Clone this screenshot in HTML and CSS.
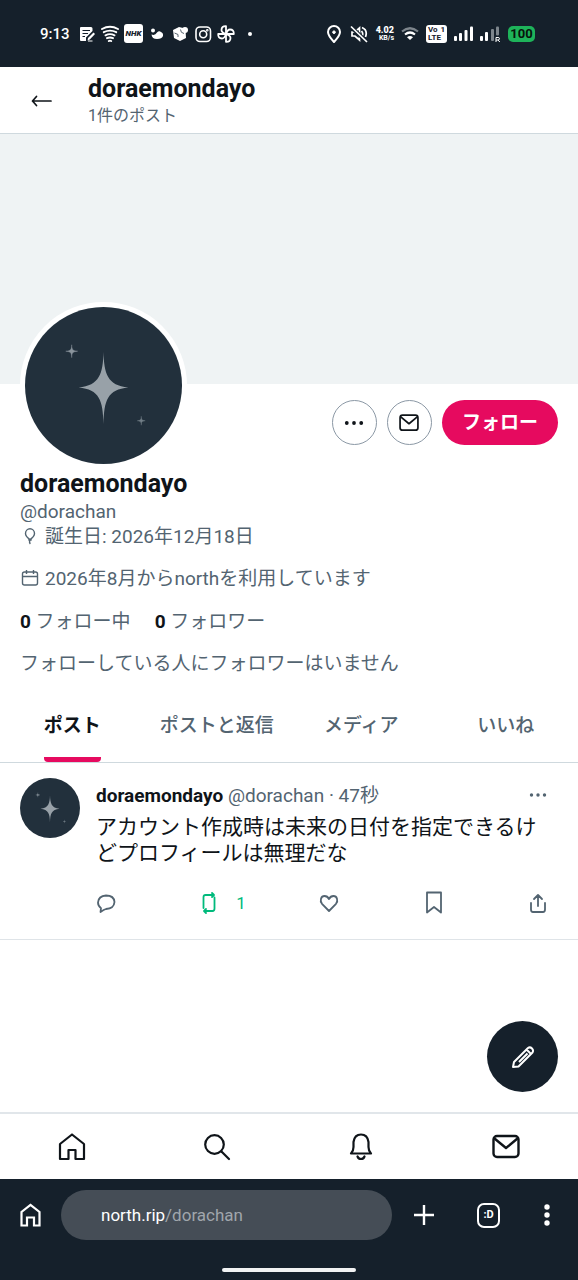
FILE: index.html
```html
<!DOCTYPE html>
<html lang="ja">
<head>
<meta charset="utf-8">
<meta name="viewport" content="width=device-width, initial-scale=1">
<title>doraemondayo (@dorachan)</title>
<link rel="stylesheet" href="styles.css">
</head>
<body>
<svg class="sprite" aria-hidden="true">
  <symbol id="avatar" viewBox="0 0 158 158">
    <rect width="158" height="158" fill="#22303c"/>
    <path d="M79 45C79.500 67 83 79 104 81C83 83 79.500 94 79 118C78.500 94 75 83 54 81C75 79 78.500 67 79 45Z" fill="#98a1a8"/>
    <path d="M47 38C47.200 43 48 44 53 44.500C48 45 47.200 46 47 51C46.800 46 46 45 41 44.500C46 44 46.800 43 47 38Z" fill="#8b959d" stroke="#8b959d" stroke-width=".400"/>
    <path d="M117 110C117.200 113.500 117.500 114 121 114.500C117.500 115 117.200 115.500 117 119C116.800 115.500 116.500 115 113 114.500C116.500 114 116.800 113.500 117 110Z" fill="#737f88" stroke="#737f88" stroke-width=".400"/>
  </symbol>
  <symbol id="mail" viewBox="0 0 28 28">
    <rect x="1.500" y="3" width="25" height="21" rx="3.500" fill="none" stroke="currentColor" stroke-width="2.400"/>
    <path d="M2.500 5.500L14 15L25.500 5.500" fill="none" stroke="currentColor" stroke-width="2.400" stroke-linejoin="round"/>
  </symbol>
  <symbol id="dots" viewBox="0 0 18 18">
    <g fill="currentColor"><circle cx="2.500" cy="9" r="1.700"/><circle cx="9" cy="9" r="1.700"/><circle cx="15.500" cy="9" r="1.700"/></g>
  </symbol>
</svg>

<div class="status">
  <div class="status-left">
    <span class="clock">9:13</span>
    <svg width="18" height="18" viewBox="0 0 18 18"><path d="M3 2H13Q14.500 2 14.500 3.500V6L8 12.500V16H3Q2 16 2 15V3Q2 2 3 2Z" fill="#fff"/><path d="M4.500 5.500H12M4.500 8.500H10M4.500 11.500H7" stroke="#15202b" stroke-width="1.200"/><path d="M9.500 15.500L10 13L15.500 7.500L17 9L11.800 14.600Z" fill="#fff"/><path d="M10 16H14.500" stroke="#fff"/></svg>
    <svg width="18" height="18" viewBox="0 0 18 18" fill="none" stroke="#fff" stroke-width="1.900" stroke-linecap="round"><path d="M1 4Q9-.500 17 4M2.800 7.200Q9 4 15.200 7.200M4.500 10.300Q9 8 13.500 10.300M6 13.200Q9 11.800 12 13.200M7.800 16Q9 15.400 10.200 16"/></svg>
    <span class="nhk">NHK</span>
    <svg width="18" height="18" viewBox="0 0 18 18" fill="#fff"><circle cx="5" cy="5.500" r="2"/><path d="M3.500 9.500Q7 11 9 7.500Q11 5.500 13 7Q15.500 8 15 11Q14 14 9 14Q4 14 3.500 9.500Z"/></svg>
    <svg width="18" height="18" viewBox="0 0 18 18"><path d="M2 5L8 2L12 3L14.500 5L15 13L9 16L3 13Z" fill="#fff"/><circle cx="14" cy="5" r="3" fill="#fff"/><path d="M9.500 4.500Q9.500 8 13 8.500M3.500 8L7 9.500V12" fill="none" stroke="#596570"/></svg>
    <svg width="18" height="18" viewBox="0 0 18 18" fill="none" stroke="#fff" stroke-width="1.600"><rect x="2" y="2" width="14.500" height="14.500" rx="4"/><circle cx="9.200" cy="9.200" r="3.500"/><circle cx="13.300" cy="5.200" r=".500"/></svg>
    <svg width="18" height="18" viewBox="0 0 18 18" fill="none" stroke="#fff" stroke-width="1.800" stroke-linejoin="round"><path id="blade" d="M9 9V1.200Q4.500 1 4.500 5Q4.500 7.500 9 9Z"/><use href="#blade" transform="rotate(90 9 9)"/><use href="#blade" transform="rotate(180 9 9)"/><use href="#blade" transform="rotate(270 9 9)"/></svg>
    <svg width="18" height="18" viewBox="0 0 18 18"><circle cx="10" cy="9" r="2" fill="#fff"/></svg>
  </div>
  <div class="status-right">
    <svg width="18" height="18" viewBox="0 0 18 18" fill="none" stroke="#fff" stroke-width="2"><path d="M9 17Q3 10.500 3 7A6 6 0 0 1 15 7Q15 10.500 9 17Z"/><circle cx="9" cy="7.200" r="1.300" fill="#fff" stroke-width="1"/></svg>
    <svg width="18" height="18" viewBox="0 0 18 18" fill="none" stroke="#fff" stroke-width="1.700"><path d="M2 7H5L9.500 3V15L5 11H2ZM11.500 6Q14 9 11.500 12M12 2.500Q18 5 15.500 12"/><path d="M1 2L17 17" stroke="#15202b" stroke-width="4"/><path d="M1 1.500L17 17"/></svg>
    <span class="speed"><b>4.02</b><span>KB/s</span></span>
    <svg width="18" height="18" viewBox="0 0 18 18" fill="none" stroke-width="2.200"><path d="M1 6.500Q9 0 17 6.500" stroke="#7d858c"/><path d="M4 9.500Q9 5.500 14 9.500" stroke="#fff"/><path d="M9 15L6 12.200Q9 9.800 12 12.200Z" fill="#fff"/></svg>
    <span class="volte"><span>Vo<i>1</i></span><span>LTE</span></span>
    <svg width="19" height="18" viewBox="0 0 19 18" fill="#fff"><rect x="0" y="11" width="3" height="5" rx="1"/><rect x="5" y="8" width="3" height="8" rx="1"/><rect x="10.500" y="5" width="3" height="11" rx="1"/><rect x="16" y="1.500" width="3" height="14.500" rx="1"/></svg>
    <svg width="21" height="18" viewBox="0 0 21 18" fill="#fff"><rect x="0" y="11" width="3" height="5" rx="1"/><rect x="5" y="7" width="3" height="9" rx="1"/><rect x="11" y="4" width="3" height="12" rx="1" fill="#7d858c"/><rect x="16" y="1.500" width="3" height="9" rx="1" fill="#7d858c"/><path d="M16 17V12.500H18Q19.500 12.500 19.500 13.700T18 15H16M18 15L19.800 17" fill="none" stroke="#fff" stroke-width="1"/></svg>
    <span class="battery">100</span>
  </div>
</div>

<header class="topbar">
  <button class="plain back" aria-label="戻る"><svg width="22" height="14" viewBox="0 0 22 14" fill="none" stroke="#0f1419" stroke-width="1.700" stroke-linecap="round" stroke-linejoin="round"><path d="M20 7H1.500M5.500 2.500L1.500 7L5.500 11.500"/></svg></button>
  <div>
    <h1 class="name">doraemondayo</h1>
    <p class="count">1件のポスト</p>
  </div>
</header>

<main>
  <div class="banner"></div>
  <section class="profile">
    <div class="profile-top">
      <svg class="avatar-large" role="img" aria-label="プロフィール画像"><use href="#avatar"/></svg>
      <div class="profile-actions">
        <button class="round" aria-label="その他"><svg width="20" height="20"><use href="#dots"/></svg></button>
        <button class="round" aria-label="メッセージ"><svg width="20" height="20"><use href="#mail"/></svg></button>
        <button class="follow">フォロー</button>
      </div>
    </div>
    <h2 class="name">doraemondayo</h2>
    <p class="handle">@dorachan</p>
    <p class="meta birthday"><svg width="20" height="20" viewBox="0 0 20 20" fill="none" stroke="currentColor" stroke-width="1.400" stroke-linecap="round"><path d="M10 12.500Q5.500 9.500 5.500 6.500A4.500 4.800 0 0 1 14.500 6.500Q14.500 9.500 10 12.500ZM8.800 13L10 12.500L11.200 13M10 13Q9 15 10 16.500"/></svg>誕生日: 2026年12月18日</p>
    <p class="meta"><svg width="20" height="20" viewBox="0 0 20 20" fill="none" stroke="currentColor" stroke-width="1.400"><rect x="2.500" y="3" width="15" height="13" rx="2"/><path d="M2.500 7.500H17.500M6.500 1V5M13.500 1V5"/></svg>2026年8月からnorthを利用しています</p>
    <div class="stats"><a href="#following"><b>0</b> フォロー中</a><a href="#followers"><b>0</b> フォロワー</a></div>
    <p class="mutual">フォローしている人にフォロワーはいません</p>
  </section>

  <nav class="tabs">
    <a class="tab active" href="#posts"><span>ポスト</span></a>
    <a class="tab" href="#replies"><span>ポストと返信</span></a>
    <a class="tab" href="#media"><span>メディア</span></a>
    <a class="tab" href="#likes"><span>いいね</span></a>
  </nav>

  <article class="post">
    <svg class="avatar-small" aria-hidden="true"><use href="#avatar"/></svg>
    <div class="post-body">
      <div class="post-head">
        <p><b>doraemondayo</b> @dorachan · 47秒</p>
        <button class="plain" aria-label="その他"><svg width="18" height="18"><use href="#dots"/></svg></button>
      </div>
      <p class="post-text">アカウント作成時は未来の日付を指定できるけどプロフィールは無理だな</p>
      <div class="post-actions">
        <button class="plain" aria-label="返信"><svg width="20" height="24" viewBox="0 0 20 24"><path d="M4.500 21L5 17.200Q2 15 2 11.500Q2.500 5 10 4.500Q18 4.500 18.500 11Q18 17.500 10 18Q8 18.500 4.500 21Z"/></svg></button>
        <button class="plain repost" aria-label="リポスト"><svg width="14" height="24" viewBox="0 0 14 24"><path d="M1.500 17V6Q1.500 4 3.500 4H11.500M10 2L12 4L10 6M12.500 6.500V17.500Q12.500 20 10.500 20H2.500M4 18L2 20L4 22"/></svg><span>1</span></button>
        <button class="plain" aria-label="いいね"><svg width="20" height="24" viewBox="0 0 20 24"><path d="M10 20L3 12.800C.500 9.500 2 5 5.500 5Q8.500 5 10 8Q11.500 5 14.500 5C18 5 19.500 9.500 17 12.800Z"/></svg></button>
        <button class="plain" aria-label="ブックマーク"><svg width="18" height="24" viewBox="0 0 18 24"><path d="M2 1.500H16V21.500L9 16L2 21.500Z"/></svg></button>
        <button class="plain" aria-label="共有"><svg width="18" height="24" viewBox="0 0 18 24"><path d="M9 15V4M5 8L9 4L13 8M2 12V18.500Q2 21 4 21H14Q16 21 16 18.500V12"/></svg></button>
      </div>
    </div>
  </article>
</main>

<footer>
  <button class="compose" aria-label="投稿する"><svg width="24" height="24" viewBox="0 0 24 24" fill="none" stroke="#fff" stroke-width="2" stroke-linejoin="round"><path d="M2 22L3 17L17 3Q19 1.500 21 3.500Q22.800 5.500 21.500 7.500L7.500 21.500ZM15.500 4.500L20 9M8 17L16.500 8.500"/></svg></button>
  <nav class="bottom-nav">
    <a href="#home" aria-label="ホーム"><svg width="28" height="28" viewBox="0 0 28 28"><path d="M2 26V11L14 1.500L26 11V26H17.500V17H10.500V26Z"/></svg></a>
    <a href="#search" aria-label="検索"><svg width="28" height="28" viewBox="0 0 28 28"><circle cx="11.500" cy="11.500" r="9.300"/><path d="M18.500 18.500L26 26"/></svg></a>
    <a href="#notifications" aria-label="通知"><svg width="28" height="28" viewBox="0 0 28 28"><path d="M4 20.500Q6.500 18 6.500 14V9Q7.500 1.500 14 1.500T21.500 9V14Q21.500 18 24 20.500ZM10.500 23.500Q11.500 26 14 26T17.500 23.500"/></svg></a>
    <a href="#messages" aria-label="メッセージ"><svg width="28" height="28"><use href="#mail"/></svg></a>
  </nav>
  <div class="browser">
    <div class="browser-row">
      <button class="plain" aria-label="ホームページ"><svg width="24" height="26" viewBox="0 0 24 26" fill="none" stroke="#fff" stroke-width="2.200"><path d="M2.500 23.500V10L11.500 3L20.500 10V23.500H15V15.500H8V23.500Z"/></svg></button>
      <button class="address">north.rip<span>/dorachan</span></button>
      <button class="plain" aria-label="新しいタブ"><svg width="20" height="20" viewBox="0 0 20 20" stroke="#fff" stroke-width="2.400"><path d="M10 0V20M0 10H20"/></svg></button>
      <button class="tab-count" aria-label="タブ">:D</button>
      <button class="plain" aria-label="メニュー"><svg width="6" height="22" viewBox="0 0 6 22" fill="#fff"><circle cx="3" cy="3" r="2.700"/><circle cx="3" cy="11" r="2.700"/><circle cx="3" cy="19" r="2.700"/></svg></button>
    </div>
    <div class="gesture"></div>
  </div>
</footer>
</body>
</html>
```
FILE: styles.css
```css
* { box-sizing: border-box; }

body {
  margin: 0;
  min-height: 100vh;
  display: flex;
  flex-direction: column;
  background: #fff;
  color: #0f1419;
  font-family: Roboto, "Noto Sans CJK JP", sans-serif;
  font-size: 19px;
  line-height: 26px;
}

h1, h2, p { margin: 0; }
a { color: inherit; text-decoration: none; }
svg { display: block; flex: none; }
.sprite { position: absolute; width: 0; height: 0; }
button { font: inherit; color: inherit; cursor: pointer; }
.plain { display: flex; align-items: center; padding: 0; border: 0; background: none; }

.status {
  display: flex;
  justify-content: space-between;
  align-items: center;
  height: 67px;
  padding: 0 43px 0 40px;
  background: #15202b;
  color: #fff;
}
.status-left, .status-right { display: flex; align-items: center; gap: 5px; }
.status-right { gap: 7px; }
.clock { width: 33px; font-size: 15px; font-weight: 500; white-space: nowrap; }
.nhk {
  width: 19px;
  border-radius: 3px;
  background: #fff;
  color: #15202b;
  font-size: 8px;
  font-weight: 900;
  font-style: italic;
  line-height: 19px;
  text-align: center;
}
.speed { width: 19px; font-size: 7px; line-height: 8px; font-weight: 700; text-align: right; }
.speed b { display: block; font-size: 9px; }
.speed span { display: block; }
.volte {
  width: 21px;
  padding: 1px 2px;
  border-radius: 3px;
  background: #fff;
  color: #15202b;
  font-size: 8px;
  font-weight: 700;
  line-height: 8px;
}
.volte span { display: flex; justify-content: space-between; }
.volte i { font-style: normal; }
.battery {
  width: 27px;
  border-radius: 5px;
  background: #1eb35a;
  color: #08140c;
  font-size: 13px;
  font-weight: 700;
  line-height: 16px;
  text-align: center;
}

.topbar {
  display: flex;
  align-items: center;
  height: 67px;
  padding-top: 1px;
  border-bottom: 1px solid #cfd9de;
}
.back { width: 88px; padding-left: 31px; }
.name { font-size: 25px; line-height: 30px; font-weight: 700; }
.count { font-size: 16px; line-height: 24px; color: #536471; }

main { flex: 1; }
.banner { height: 250px; background: #eff3f4; }
.profile { padding: 0 20px; color: #536471; }
.profile-top {
  display: flex;
  justify-content: space-between;
  align-items: flex-start;
  height: 85px;
}
.avatar-large {
  width: 167px;
  height: 167px;
  margin-top: -82px;
  border: 5px solid #fff;
  border-radius: 50%;
}
.profile-actions { display: flex; gap: 10px; padding-top: 16px; }
.round {
  display: grid;
  place-items: center;
  width: 45px;
  height: 45px;
  padding: 0;
  border: 1px solid #8b98a5;
  border-radius: 50%;
  background: #fff;
  color: #0f1419;
}
.follow {
  height: 45px;
  padding: 0 20px;
  border: 0;
  border-radius: 23px;
  background: #e60a5f;
  color: #fff;
  font-weight: 700;
}
.profile .name { color: #0f1419; }
.handle { line-height: 25px; }
.meta { display: flex; align-items: center; gap: 5px; }
.birthday { margin-bottom: 16px; }
.stats { display: flex; gap: 24px; margin-top: 17px; }
.stats b { color: #0f1419; }
.mutual { margin-top: 16px; }

.tabs { display: flex; height: 75px; margin-top: 11px; border-bottom: 1px solid #cfd9de; }
.tabs { color: #536471; font-weight: 500; }
.tab { flex: 1; display: flex; justify-content: center; }
.tab span { display: block; padding-top: 25px; }
.tab.active span { color: #0f1419; font-weight: 700; border-bottom: 5px solid #e60a5f; border-radius: 0 0 4px 4px; }

.post { display: flex; gap: 16px; padding: 15px 20px; border-bottom: 1px solid #dfe4e8; }
.avatar-small { width: 60px; height: 60px; border-radius: 50%; }
.post-body { flex: 1; min-width: 0; padding-right: 11px; }
.post-head { display: flex; justify-content: space-between; align-items: flex-start; color: #536471; }
.post-head p { padding: 5px 0; }
.post-head button { height: 34px; }
.post-head b { color: #0f1419; }
.post-text { font-size: 21px; }
.post-actions { display: flex; justify-content: space-between; margin-top: 24px; padding-bottom: 8px; color: #536471; }
.post-actions svg { fill: none; stroke: currentColor; stroke-width: 1.800; stroke-linejoin: round; stroke-linecap: round; }
.repost { gap: 20px; width: 30px; color: #00ba7c; font-size: 17px; }

footer { position: sticky; bottom: 0; background: #fff; }
.compose {
  position: absolute;
  right: 20px;
  bottom: 188px;
  display: grid;
  place-items: center;
  width: 71px;
  height: 71px;
  border: 0;
  border-radius: 50%;
  background: #15202b;
}
.bottom-nav { display: flex; align-items: center; height: 67px; border-top: 2px solid #e1e6ea; }
.bottom-nav a { flex: 1; display: flex; justify-content: center; }
.bottom-nav svg { fill: none; stroke: currentColor; stroke-width: 2.200; stroke-linejoin: round; stroke-linecap: round; }
.browser { padding: 11px 0 8px; background: #15202b; color: #fff; }
.browser-row { display: flex; align-items: center; gap: 22px; padding: 0 28px 0 19px; }
.address {
  flex: 1;
  height: 50px;
  margin-left: -4px;
  padding: 0 40px;
  border: 0;
  border-radius: 25px;
  background: #454d56;
  font-size: 17px;
  text-align: left;
}
.address span { color: #a0a6ac; }
.tab-count {
  width: 23px;
  height: 25px;
  margin: 0 22px 0 21px;
  padding: 0;
  border: 2px solid #fff;
  border-radius: 7px;
  background: none;
  font-size: 11px;
  font-weight: 700;
  line-height: 20px;
}
.gesture { width: 134px; height: 4px; margin: 28px auto 0; border-radius: 2px; background: #f1f2f3; }
```
